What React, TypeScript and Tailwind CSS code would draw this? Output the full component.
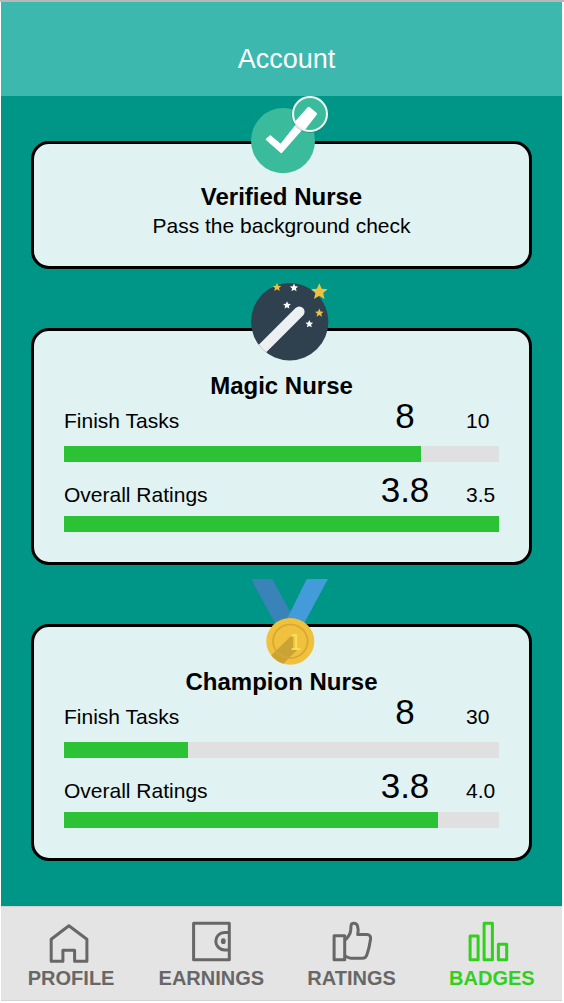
import type { ReactNode } from 'react';

const STAR = 'M0-1 .28-.36 .97-.31 .45.15 .61.83 0 .47-.61.83-.45.15-.97-.31-.28-.36Z';

function Star({ x, y, size, fill }: { x: number; y: number; size: number; fill: string }) {
  return <path d={STAR} fill={fill} transform={`translate(${x} ${y}) scale(${size})`} />;
}

function VerifiedBadge() {
  return (
    <svg width="78" height="78" viewBox="0 0 78 78" aria-hidden="true">
      <defs>
        <clipPath id="lens"><circle cx="59" cy="18" r="17" /></clipPath>
      </defs>
      <ellipse cx="32" cy="44.7" rx="32" ry="32.6" fill="#3abb9b" />
      <path d="M15.5 43.3 19.3 40 29.8 48.8 45 29.5 50 34 30.3 56.5Z" fill="#fff" stroke="#fff" strokeWidth="1.6" strokeLinejoin="round" />
      <circle cx="58.8" cy="18.6" r="18.4" fill="#000" opacity=".2" />
      <circle cx="59" cy="18" r="17" fill="#3abb9b" />
      <path clipPath="url(#lens)" d="M57.7 12.2 64.6 17.8 49 38 40 32Z" fill="#fff" stroke="#fff" strokeWidth="2.8" strokeLinejoin="round" />
      <circle cx="59" cy="18" r="17" fill="none" stroke="#eef3f2" strokeWidth="2.1" />
    </svg>
  );
}

function MagicBadge() {
  return (
    <svg width="78" height="78" viewBox="0 0 78 78" aria-hidden="true">
      <defs>
        <clipPath id="disc"><circle cx="38.7" cy="38.7" r="38.7" /></clipPath>
      </defs>
      <circle cx="38.7" cy="38.7" r="38.7" fill="#2f404f" />
      <path clipPath="url(#disc)" d="M4 73 48.3 28.7" stroke="#edf0f1" strokeWidth="10.6" strokeLinecap="round" />
      <Star x={26} y={4.3} size={4.4} fill="#efc13c" />
      <Star x={43} y={4.8} size={4.2} fill="#fff" />
      <Star x={68.3} y={8.8} size={8.6} fill="#efc13c" />
      <Star x={36} y={22.3} size={4} fill="#fff" />
      <Star x={68.3} y={30} size={4.4} fill="#efc13c" />
      <Star x={58.3} y={41} size={4} fill="#fff" />
    </svg>
  );
}

function ChampionBadge() {
  return (
    <svg width="78" height="87" viewBox="0 0 78 87" aria-hidden="true">
      <defs>
        <clipPath id="medal"><ellipse cx="39.3" cy="62.3" rx="24" ry="23.4" /></clipPath>
      </defs>
      <path d="M0 0H21.3L39.8 34 36 46H25Z" fill="#3983b8" />
      <path d="M55.7 0H77L51 48 34 44Z" fill="#449bda" />
      <ellipse cx="39.3" cy="62.3" rx="24" ry="23.4" fill="#efc13c" />
      <path clipPath="url(#medal)" d="M40.5 56.5 18 78.5 29 88 46 71 42 71 42 57.5Z" fill="#cba335" />
      <ellipse cx="39.3" cy="62.3" rx="17.3" ry="16.8" fill="none" stroke="#d7a732" strokeWidth="1.6" />
      <text x="44.8" y="71" textAnchor="middle" fill="#f8e05a" fontSize="21" fontFamily="'DejaVu Sans', sans-serif">1</text>
    </svg>
  );
}

function Card({ title, badge, className, children }: { title: string; badge: ReactNode; className: string; children: ReactNode }) {
  return (
    <section className={`relative rounded-[18px] border-[3px] border-black bg-[#e0f2f1] px-[30px] ${className}`}>
      <div className="absolute -top-12 left-1/2 -translate-x-[31px]">{badge}</div>
      <h2 className="text-center text-[24px] leading-6 font-bold">{title}</h2>
      {children}
    </section>
  );
}

function Metric({ label, value, target, percent, className }: { label: string; value: string; target: string; percent: number; className: string }) {
  return (
    <div className={`flex flex-col ${className}`}>
      <div className="flex items-baseline">
        <span className="flex-1 text-[21px] leading-6">{label}</span>
        <span className="w-16 text-center text-[35px] leading-9">{value}</span>
        <span className="ml-[29px] w-[33px] text-[21px] leading-6">{target}</span>
      </div>
      <div className="h-4 bg-[#e0e0e0]" role="progressbar" aria-label={label} aria-valuenow={percent}>
        <div className="h-full bg-[#2bc335]" style={{ width: `${percent}%` }} />
      </div>
    </div>
  );
}

function GoalCard({ title, badge, tasks, ratings }: { title: string; badge: ReactNode; tasks: [string, string, number]; ratings: [string, string, number] }) {
  return (
    <Card title={title} badge={badge} className="pt-[43px] pb-[30px]">
      <Metric label="Finish Tasks" value={tasks[0]} target={tasks[1]} percent={tasks[2]} className="gap-3" />
      <Metric label="Overall Ratings" value={ratings[0]} target={ratings[1]} percent={ratings[2]} className="mt-[10px] gap-2" />
    </Card>
  );
}

function Tab({ label, active, children }: { label: string; active?: boolean; children: ReactNode }) {
  return (
    <a
      href="#"
      aria-current={active ? 'page' : undefined}
      className={`flex flex-col items-center gap-0.5 text-[20px] leading-6 font-bold ${active ? 'text-[#32cf1d]' : 'text-[#676767]'}`}
    >
      <svg className="overflow-visible" width="44" height="44" viewBox="0 0 44 44" fill="none" stroke="currentColor" strokeWidth="3" strokeLinejoin="round" aria-hidden="true">
        {children}
      </svg>
      {label}
    </a>
  );
}

export default function App() {
  return (
    <div className="flex min-h-screen flex-col border-t-2 border-[#b8b8b8] bg-white pr-0.5 pb-0.5 pl-px font-['Liberation_Sans',Arial,sans-serif] text-black">
      <header className="bg-[#3db8af] pt-[41px] pb-[21px] pl-[10px]">
        <h1 className="text-center text-[27px] leading-8 text-white">Account</h1>
      </header>

      <main className="flex flex-1 flex-col gap-[59px] bg-[#009687] px-[30px] py-[45px]">
        <Card title="Verified Nurse" badge={<VerifiedBadge />} className="pt-[41px] pb-[28px]">
          <p className="mt-[5px] text-center text-[21px] leading-6">Pass the background check</p>
        </Card>
        <GoalCard title="Magic Nurse" badge={<MagicBadge />} tasks={['8', '10', 82]} ratings={['3.8', '3.5', 100]} />
        <GoalCard title="Champion Nurse" badge={<ChampionBadge />} tasks={['8', '30', 28.5]} ratings={['3.8', '4.0', 86]} />
      </main>

      <nav className="grid grid-cols-4 border-y border-[#d2d2d2] bg-[#e4e4e4] pt-[13px] pb-[10px]">
        <Tab label="PROFILE">
          <path d="M19.9 5.7 37.9 19.3V41.3H25.6V30.3H13.9V41.3H2.2V19.3Z" />
        </Tab>
        <Tab label="EARNINGS">
          <rect x="4.6" y="3.3" width="35.7" height="36.4" />
          <path d="M40.3 12.5H35.5A8.7 8.7 0 0 0 35.5 29.9H40.3" />
          <ellipse cx="34.3" cy="21.2" rx="2.4" ry="2.9" fill="currentColor" stroke="none" />
        </Tab>
        <Tab label="RATINGS">
          <rect x="4.1" y="15.7" width="10.6" height="24" />
          <path d="M14.7 20C17 19 20.4 14 20.7 10.5L21 6C21.2 2.5 26.3 2.3 27.5 6C28.6 9.2 28.4 12 27.7 14.6H36.8C39.8 14.6 41 16.4 40.5 19.2C39.8 24.5 38.7 29.7 36.8 35C36 37.4 34.4 38.2 32.4 38.2H21C18.4 38.2 17 36.6 14.7 36" />
        </Tab>
        <Tab label="BADGES" active>
          <rect x="0.1" y="16" width="8" height="23.7" />
          <rect x="14.1" y="3.3" width="8.3" height="36.4" />
          <rect x="28.4" y="24.3" width="8.3" height="15.4" />
        </Tab>
      </nav>
    </div>
  );
}
